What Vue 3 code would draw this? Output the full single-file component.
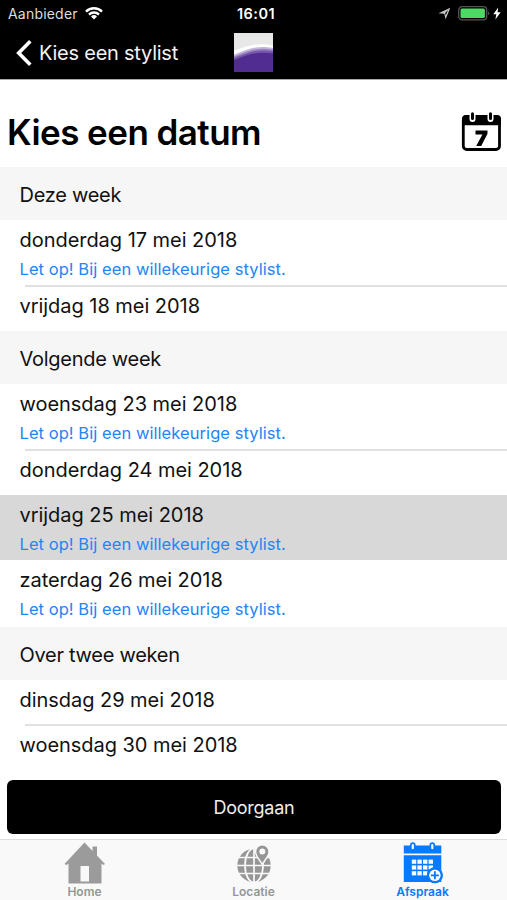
<script setup>
const note = 'Let op! Bij een willekeurige stylist.'
const sections = [
  {
    title: 'Deze week',
    days: [
      { date: 'donderdag 17 mei 2018', note, line: true },
      { date: 'vrijdag 18 mei 2018' },
    ],
  },
  {
    title: 'Volgende week',
    days: [
      { date: 'woensdag 23 mei 2018', note, line: true },
      { date: 'donderdag 24 mei 2018' },
      { date: 'vrijdag 25 mei 2018', note, selected: true },
      { date: 'zaterdag 26 mei 2018', note, last: true },
    ],
  },
  {
    title: 'Over twee weken',
    days: [
      { date: 'dinsdag 29 mei 2018', line: true },
      { date: 'woensdag 30 mei 2018' },
    ],
  },
]
// Squares of the appointment calendar: three rows of four
const cells = Array.from({ length: 12 }, (_, i) => ({
  x: 10.5 + (i % 4) * 5.6,
  y: 17.6 + Math.floor(i / 4) * 5.8,
}))
</script>

<template>
  <div class="screen">
    <header class="top">
      <div class="status">
        <div class="carrier">
          <span>Aanbieder</span>
          <svg width="18" height="13" viewBox="0 0 18 13" fill="none" stroke="#fff" stroke-width="2.4">
            <path d="M1 4.600a11.300 11.300 0 0 1 16 0M4 7.600a7.100 7.100 0 0 1 10 0" />
            <path d="M6 9.500a4.300 4.300 0 0 1 6 0L9 12.600z" fill="#fff" stroke="none" />
          </svg>
        </div>
        <span class="clock">16:01</span>
        <div class="power">
          <svg width="13" height="13" viewBox="0 0 13 13">
            <path d="M.5 6.300 12.300.7 7.600 12.300 6.300 6.700z" fill="#c8c8c8" />
            <path d="M7.200 5.900 10 3 7.700 8.600z" fill="#000" />
          </svg>
          <svg width="32" height="15" viewBox="0 0 32 15">
            <rect x=".7" y=".7" width="28" height="13.2" rx="3.4" fill="none" stroke="#555" stroke-width="1.3" />
            <rect x="2.5" y="2.5" width="24.4" height="9.6" rx="1.5" fill="#4cd964" />
            <path d="M30 5.200q2.400 2.100 0 4.300z" fill="#555" />
          </svg>
          <svg width="8" height="13" viewBox="0 0 8 13"><path d="M5.200.4.3 7.200h3L2.400 12.600 7.700 5.300H4.600z" fill="#fff" /></svg>
        </div>
      </div>
      <div class="nav">
        <div class="back">
          <svg width="16" height="26" viewBox="0 0 16 26" fill="none" stroke="#fff" stroke-width="3.6">
            <path d="M14.300 1.300 2.700 13l11.600 11.700" />
          </svg>
          <span>Kies een stylist</span>
        </div>
        <svg class="brand" width="39" height="39" viewBox="0 0 39 39">
          <rect width="39" height="39" fill="#e8e8e8" />
          <path d="M0 17.500C10 15 20 8.500 39 12.500V39H0z" fill="#fff" />
          <path d="M0 21.500C10 18 20 11.500 39 15V39H0z" fill="#c5b8dc" />
          <path d="M0 23.500C10 20 20 13.500 39 16.500V39H0z" fill="#9c85c3" />
          <path d="M0 25C10 21.500 20 15.500 39 18V39H0z" fill="#7655aa" />
          <path d="M0 27C10 23.500 20 17.500 39 20.500V39H0z" fill="#522d91" />
        </svg>
      </div>
    </header>

    <div class="heading">
      <h1>Kies een datum</h1>
      <svg width="40" height="40" viewBox="0 0 40 40">
        <rect x="2.300" y="4.500" width="36.200" height="33" rx="3.500" fill="#fff" stroke="#000" stroke-width="2.800" />
        <path d="M1 13.300V7q0-4 4-4h31q4 0 4 4v6.300z" />
        <g stroke-linecap="round">
          <path d="M11.500 3.500v3.500M29.500 3.500v3.500" stroke="#fff" stroke-width="6" />
          <path d="M11.500 1.800v4.700M29.500 1.800v4.700" stroke="#000" stroke-width="3" />
        </g>
        <path d="M14.500 18.500h12v3.300L20.200 34h-5l6.200-11.500h-6.900z" />
      </svg>
    </div>

    <main>
      <section v-for="s in sections" :key="s.title">
        <h2>{{ s.title }}</h2>
        <div v-for="d in s.days" :key="d.date" class="day" :class="{ noted: d.note, line: d.line, selected: d.selected, last: d.last }">
          <span class="date">{{ d.date }}</span>
          <span v-if="d.note" class="note">{{ d.note }}</span>
        </div>
      </section>
    </main>

    <button>Doorgaan</button>

    <nav class="tabs">
      <div class="tab">
        <svg width="42" height="42" viewBox="1 0 42 42" fill="#9b9b9b">
          <path d="M29.500 4.500h4.500v10l-4.500-4.500z" />
          <path fill-rule="evenodd" d="M21.500.5 42 22l-1.500 1-2-1.500V41.500h-33V21.500l-2 1.500L1.500 22zM17.500 24v15.500h8.500V24z" />
        </svg>
        <span>Home</span>
      </div>
      <div class="tab">
        <svg width="42" height="42" viewBox="0.5 0 42 42">
          <circle cx="21.500" cy="23.500" r="16.700" fill="#969696" />
          <g fill="none" stroke="#fafafa" stroke-width="1.700">
            <path d="M21.500 6v35M4 23.500h35M6 15.500h31M6 31.500h31" />
            <ellipse cx="21.500" cy="23.500" rx="9" ry="17" />
          </g>
          <path d="M29.800 21c-3-5-6-7.500-6-11.500a6 6 0 0 1 12 0c0 4-3 6.500-6 11.500z" fill="#fafafa" stroke="#fafafa" stroke-width="3" />
          <path fill-rule="evenodd" d="M29.800 21c-3-5-6-7.500-6-11.500a6 6 0 0 1 12 0c0 4-3 6.500-6 11.500zm0-14.500a3 3 0 1 0 0 6 3 3 0 0 0 0-6z" fill="#969696" />
        </svg>
        <span>Locatie</span>
      </div>
      <div class="tab active">
        <svg width="42" height="42" viewBox="0.7 0 42 42">
          <path d="M2.500 3.500H40v8H2.500zM2.500 13.200H40V40H2.500z" fill="#087aff" />
          <path d="M11.500 3v3M31 3v3" stroke="#087aff" stroke-width="5.600" stroke-linecap="round" />
          <path d="M11.500 3v3.200M31 3v3.200" stroke="#fafafa" stroke-width="2.200" stroke-linecap="round" />
          <rect v-for="(c, i) in cells" :key="i" :x="c.x" :y="c.y" width="4.400" height="4.200" fill="#fafafa" />
          <circle cx="33.600" cy="33.300" r="8" fill="#087aff" />
          <circle cx="33.600" cy="33.300" r="5.800" fill="#fafafa" />
          <circle cx="33.600" cy="33.300" r="7" fill="none" stroke="#087aff" stroke-width="1.700" />
          <path d="M33.600 29.300v8M29.600 33.300h8" stroke="#087aff" stroke-width="1.800" />
        </svg>
        <span>Afspraak</span>
      </div>
    </nav>
  </div>
</template>

<style>
body { margin: 0; }
</style>

<style scoped>
.screen { width: 507px; height: 900px; display: flex; flex-direction: column; overflow: hidden; background: #fff; font-family: Inter, "Liberation Sans", sans-serif; color: #111; }
svg { display: block; flex: none; }
.top { height: 80px; box-sizing: border-box; border-bottom: 1px solid #aaa; flex: none; background: #000; color: #fff; }
.status { height: 27px; display: grid; grid-template-columns: 1fr auto 1fr; align-items: center; padding: 0 6px 0 8px; box-sizing: border-box; font-size: 14px; }
.carrier { display: flex; align-items: center; gap: 7px; color: #ddd; letter-spacing: .2px; }
.clock { font-weight: 600; font-size: 14.500px; letter-spacing: .5px; padding-left: 3px; }
.power { display: flex; align-items: center; justify-content: flex-end; gap: 3px; }
.power svg:first-child { margin-right: 4px; }
.nav { height: 52px; display: grid; grid-template-columns: 1fr 39px 1fr; }
.back { display: flex; align-items: center; gap: 7px; padding-left: 16px; font-size: 20px; color: #f2f2f2; letter-spacing: -.24px; height: 51px; }
.brand { margin-top: 6px; }
.heading { height: 87px; flex: none; display: flex; align-items: center; justify-content: space-between; padding: 16px 6px 0 7px; box-sizing: border-box; }
h1 { margin: 0; font-size: 35px; line-height: 44px; font-weight: 600; color: #000; letter-spacing: -.55px; }
h2 { margin: 0; height: 53px; padding: 1px 0 0 19.500px; box-sizing: border-box; line-height: 54px; font-size: 20px; font-weight: 400; letter-spacing: -.28px; background: #f6f6f6; }
.day { position: relative; height: 45px; padding: 7px 0 0 19.500px; box-sizing: border-box; display: flex; flex-direction: column; }
.noted { height: 66px; }
.selected { height: 65px; background: #d8d8d8; }
.last { height: 67px; }
.line::after { content: ""; position: absolute; left: 25px; right: 0; bottom: -1px; height: 2px; background: #e1e1e1; }
.date { font-size: 20px; line-height: 26px; letter-spacing: -.04px; white-space: nowrap; }
.note { margin-top: 5px; font-size: 16.500px; line-height: 22px; letter-spacing: .06px; color: #2485f6; white-space: nowrap; }
button { width: 494px; height: 54px; flex: none; margin: 10px 0 0 7px; padding: 0; border: 0; border-radius: 6px; background: #000; color: #eee; font: 400 18px Inter, "Liberation Sans", sans-serif; letter-spacing: -.25px; }
.tabs { margin-top: 5px; height: 61px; box-sizing: border-box; display: grid; grid-template-columns: repeat(3, 1fr); border-top: 1px solid #ddd; background: #f9f9f9; }
.tab { display: flex; flex-direction: column; align-items: center; padding-top: 2px; color: #969696; font-size: 12px; line-height: 16px; font-weight: 600; }
.active { color: #087aff; }
</style>
